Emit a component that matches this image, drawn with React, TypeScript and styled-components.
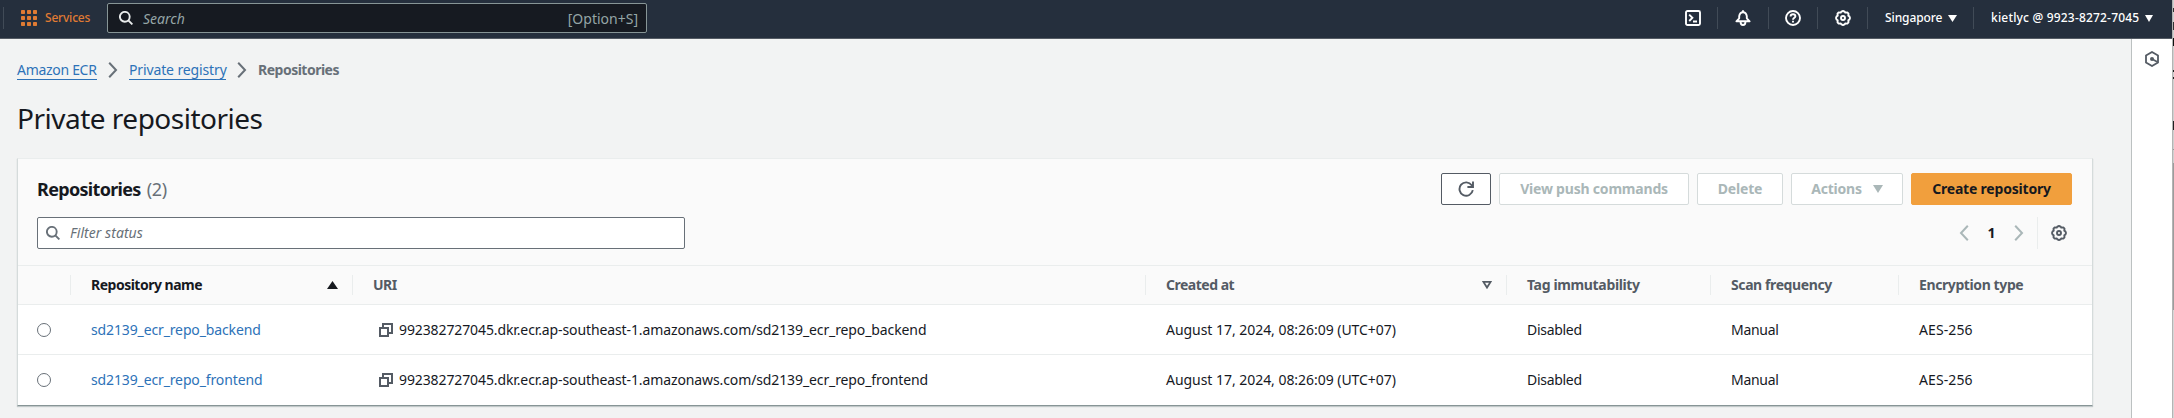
import React from 'react';
import styled, { createGlobalStyle, css } from 'styled-components';

const Global = createGlobalStyle`
  * { box-sizing: border-box; }
  body { margin: 0; background: #f2f3f3; }
  body, button, input { font-family: "Noto Sans", "Open Sans", sans-serif; font-size: 14px; color: #16191f; }
`;

const Page = styled.div`
  display: flex;
  width: 2174px;
  height: 418px;
  overflow: hidden;
`;

const Console = styled.div`
  display: flex;
  flex-direction: column;
  width: 2172px;
  flex: none;
`;

const Label = styled.span<{ $track?: number; $size?: number; $weight?: number; $italic?: boolean; $color?: string }>`
  white-space: nowrap;
  line-height: 20px;
  font-size: ${p => p.$size ?? 14}px;
  letter-spacing: ${p => p.$track ?? 0}px;
  font-weight: ${p => p.$weight ?? 400};
  ${p => p.$italic && css`font-style: italic;`}
  ${p => p.$color && css`color: ${p.$color};`}
`;

const TopBar = styled.header`
  display: flex;
  align-items: flex-start;
  height: 39px;
  background: #252f3d;
  border-bottom: 1px solid #545b64;
`;

const BarDivider = styled.i`
  width: 1px;
  height: 22px;
  margin-top: 7px;
  background: #414b57;
`;

const Services = styled.div`
  display: flex;
  align-items: center;
  gap: 8px;
  width: 103px;
  height: 36px;
  padding-left: 17px;
`;

const SearchBox = styled.div`
  display: flex;
  align-items: center;
  width: 540px;
  height: 30px;
  margin-top: 3px;
  padding: 0 8px 0 11px;
  background: #161a21;
  border: 1px solid #879596;
  border-radius: 2px;
`;

const SearchHint = styled.div`
  flex: 1;
  display: flex;
  justify-content: space-between;
  padding: 1px 0 0 10px;
`;

const BarTools = styled.nav`
  display: flex;
  margin-left: auto;
`;

const BarItem = styled.div<{ $w: number; $pad: number }>`
  display: flex;
  align-items: center;
  gap: 6px;
  height: 36px;
  width: ${p => p.$w}px;
  padding-left: ${p => p.$pad}px;
`;

const Body = styled.div`
  display: flex;
  flex: 1;
`;

const Main = styled.main`
  width: 2131px;
  padding: 21px 0 0 17px;
`;

const Crumbs = styled.nav`
  display: flex;
  align-items: center;
  height: 20px;
  gap: 11px;
`;

const CrumbLink = styled.a<{ $w: number }>`
  display: block;
  width: ${p => p.$w}px;
  height: 20px;
  border-bottom: 1px solid #2d72b8;
  color: #2d72b8;
`;

const Title = styled.h1`
  margin: 20px 0 0;
  height: 36px;
  line-height: 36px;
  font-size: 28px;
  font-weight: 400;
  letter-spacing: -0.5px;
`;

const Card = styled.section`
  width: 2076px;
  height: 248px;
  margin-top: 22px;
  background: #fff;
  border: 1px solid #d5dbdb;
  border-top-color: #eaeded;
  border-bottom-color: #879596;
  box-shadow: 0 1px 1px rgba(0, 28, 36, 0.2);
`;

const CardHead = styled.div`
  height: 107px;
  padding: 14px 20px 0 19px;
  background: #fafafa;
  border-bottom: 1px solid #eaeded;
`;

const HeadRow = styled.div<{ $top?: number }>`
  display: flex;
  align-items: center;
  justify-content: space-between;
  height: 32px;
  margin-top: ${p => p.$top ?? 0}px;
`;

const Heading = styled.h2`
  display: flex;
  gap: 6px;
  margin: 0;
  font-weight: 400;
`;

const Buttons = styled.div`
  display: flex;
  gap: 8px;
`;

const Button = styled.button<{ $w: number; $kind?: 'primary' | 'disabled' }>`
  display: flex;
  align-items: center;
  justify-content: center;
  gap: 11px;
  width: ${p => p.$w}px;
  height: 32px;
  padding: 0;
  border: 1px solid #545b64;
  border-radius: 2px;
  background: #fff;
  ${p => p.$kind === 'disabled' && css`border-color: #d5dbdb; color: #aab7b8;`}
  ${p => p.$kind === 'primary' && css`border-color: #f19f3d; background: #f19f3d;`}
`;

const Filter = styled.div`
  display: flex;
  align-items: center;
  gap: 10px;
  width: 648px;
  height: 32px;
  padding-left: 8px;
  background: #fff;
  border: 1px solid #687078;
  border-radius: 2px;
`;

const Pager = styled.div`
  display: flex;
  align-items: center;
  height: 32px;
`;

const PageNumber = styled.div`
  width: 45px;
  text-align: center;
`;

const Settings = styled.div`
  display: flex;
  align-items: center;
  height: 32px;
  margin-left: 13px;
  padding: 0 5px 0 13px;
  border-left: 1px solid #eaeded;
`;

const Row = styled.div<{ $h: number; $head?: boolean }>`
  display: grid;
  grid-template-columns: 52px 282px 793px 361px 204px 188px 194px;
  align-items: center;
  height: ${p => p.$h}px;
  ${p => p.$head && css`background: #fafafa; color: #545b64;`}
  &:not(:last-child) { border-bottom: 1px solid #eaeded; }
`;

const HeadCell = styled.div`
  display: flex;
  align-items: center;
  justify-content: space-between;
  height: 20px;
  padding: 0 14px 0 20px;
  &:not(:first-child) { border-left: 1px solid #eaeded; }
`;

const Cell = styled.div<{ $pad?: number }>`
  display: flex;
  align-items: center;
  gap: 6px;
  padding-left: ${p => p.$pad ?? 21}px;
`;

const Radio = styled.i`
  width: 14px;
  height: 14px;
  border: 1px solid #687078;
  border-radius: 50%;
  background: #fff;
`;

const SidePanel = styled.aside`
  width: 41px;
  padding: 12px 0 0 13px;
  background: #fff;
  border-left: 1px solid #bcc1c1;
`;

const Edge = styled.div`
  width: 2px;
  display: flex;
  flex-direction: column;
  border-left: 1px solid #b4b4b4;
`;

const EdgePart = styled.i<{ $h: number; $c: string }>`
  height: ${p => p.$h}px;
  background: ${p => p.$c};
`;

const Svg = styled.svg`
  display: block;
  flex: none;
  fill: none;
`;

const SearchIcon = ({ color }: { color: string }) => (
  <Svg width="14" height="14" viewBox="0 0 14 14" stroke={color} strokeWidth="1.9">
    <circle cx="5.8" cy="5.8" r="4.9" />
    <path d="M9.3 9.3L13.4 13.4" />
  </Svg>
);

const GearIcon = ({ color }: { color: string }) => (
  <Svg width="16" height="16" viewBox="0 0 16 16" stroke={color} strokeWidth="1.9" strokeLinejoin="round">
    <path d="M6.3 1.6L8 1L9.7 1.6L10.2 2.6L12.3 2.4L13.5 3.7L13.3 5.7L14.4 6.4L15 8L14.4 9.6L13.3 10.3L13.5 12.3L12.3 13.6L10.2 13.4L9.7 14.4L8 15L6.3 14.4L5.8 13.4L3.7 13.6L2.5 12.3L2.7 10.3L1.6 9.6L1 8L1.6 6.4L2.7 5.7L2.5 3.7L3.7 2.4L5.8 2.6Z" />
    <circle cx="8" cy="8" r="2" />
  </Svg>
);

const Chevron = ({ color, left }: { color: string; left?: boolean }) => (
  <Svg width="10" height="16" viewBox="0 0 10 16" stroke={color} strokeWidth="2">
    <path d={left ? 'M8.8 0.8L2 8L8.8 15.2' : 'M1.2 0.8L8 8L1.2 15.2'} />
  </Svg>
);

const Triangle = ({ color, w = 8, h = 7, up }: { color: string; w?: number; h?: number; up?: boolean }) => (
  <Svg width={w} height={h} viewBox="0 0 8 7" preserveAspectRatio="none">
    <path d={up ? 'M4 0L8 7H0Z' : 'M0 0H8L4 7Z'} fill={color} />
  </Svg>
);

const CopyIcon = () => (
  <Svg width="14" height="14" viewBox="0 0 14 14" stroke="#545b64" strokeWidth="2">
    <path d="M1 5H9V13H1Z" />
    <path d="M4 5V1H13V10H9" />
  </Svg>
);

const repos = ['sd2139_ecr_repo_backend', 'sd2139_ecr_repo_frontend'];

const edgeParts: [number, string][] = [
  [8, '#d0d0d0'], [4, '#333'], [10, '#d0d0d0'], [8, '#333'], [8, '#d0d0d0'], [8, '#111'],
  [24, '#d0d0d0'], [2, '#222'], [5, '#d0d0d0'], [2, '#222'], [42, '#d0d0d0'], [9, '#222'],
  [19, '#d0d0d0'], [1, '#999'], [13, '#d0d0d0'], [147, '#9c9c9c'], [108, '#d6d6d6'],
];

export default function App() {
  return (
    <Page>
      <Global />
      <Console>
        <TopBar>
          <BarDivider style={{ marginLeft: 3 }} />
          <Services>
            <Svg width="16" height="16" viewBox="0 0 16 16">
              {[0, 6, 12].map(y => [0, 6, 12].map(x => (
                <rect key={`${x}-${y}`} x={x} y={y} width="4" height="4" rx="0.7" fill="#e07b33" />
              )))}
            </Svg>
            <Label $size={12} $weight={500} $track={-0.2} $color="#e07b33">Services</Label>
          </Services>
          <SearchBox>
            <SearchIcon color="#eaeded" />
            <SearchHint>
              <Label $italic $color="#95a5a6" $track={0}>Search</Label>
              <Label $color="#95a5a6">[Option+S]</Label>
            </SearchHint>
          </SearchBox>
          <BarTools>
            <BarItem $w={32} $pad={0}>
              <Svg width="16" height="16" viewBox="0 0 16 16" stroke="#fff" strokeWidth="1.9">
                <rect x="1" y="1" width="14" height="14" rx="1.5" />
                <path d="M4.2 4.6L7.4 7.8L4.2 11M8 11.5H12" />
              </Svg>
            </BarItem>
            <BarDivider />
            <BarItem $w={50} $pad={17}>
              <Svg width="16" height="16" viewBox="0 0 16 16" stroke="#fff" strokeWidth="1.9" strokeLinejoin="round">
                <path d="M1.4 11.3L4.2 8.3V6.2C4.6 3.6 6 2.2 8 2.2S11.4 3.6 11.8 6.2V8.3L14.6 11.3Z" />
                <path d="M8 0.2V2.5M5.6 12C5.6 14 6.6 15 8 15S10.4 14 10.4 12" />
              </Svg>
            </BarItem>
            <BarDivider />
            <BarItem $w={48} $pad={16}>
              <Svg width="16" height="16" viewBox="0 0 16 16" stroke="#fff" strokeWidth="1.9">
                <circle cx="8" cy="8" r="7" />
                <path d="M5.6 6.5C5.6 4.9 6.6 4.2 8 4.2S10.4 5 10.4 6.2C10.4 7.8 8 7.6 8 9.8M8 10.8V12.6" />
              </Svg>
            </BarItem>
            <BarDivider />
            <BarItem $w={49} $pad={17}><GearIcon color="#fff" /></BarItem>
            <BarDivider />
            <BarItem $w={105} $pad={17}>
              <Label $size={12} $weight={500} $track={-0.1} $color="#fff">Singapore</Label>
              <Triangle color="#fff" w={9} />
            </BarItem>
            <BarDivider />
            <BarItem $w={198} $pad={17}>
              <Label $size={12} $weight={500} $track={0.18} $color="#fff">kietlyc @ 9923-8272-7045</Label>
              <Triangle color="#fff" />
            </BarItem>
          </BarTools>
        </TopBar>
        <Body>
          <Main>
            <Crumbs>
              <CrumbLink $w={80}><Label $track={-0.3}>Amazon ECR</Label></CrumbLink>
              <Chevron color="#687078" />
              <CrumbLink $w={97}><Label $track={-0.13}>Private registry</Label></CrumbLink>
              <Chevron color="#687078" />
              <Label $weight={700} $color="#687078" $track={-0.5}>Repositories</Label>
            </Crumbs>
            <Title>Private repositories</Title>
            <Card>
              <CardHead>
                <HeadRow>
                  <Heading>
                    <Label $size={18} $weight={700} $track={-0.68}>Repositories</Label>
                    <Label $size={18} $color="#687078" $track={-0.3}>(2)</Label>
                  </Heading>
                  <Buttons>
                    <Button $w={50}>
                      <Svg width="16" height="16" viewBox="0 0 16 16" stroke="#545b64" strokeWidth="1.9">
                        <path d="M14.8 9.2A6.7 6.7 0 1 1 13.7 4.2L14.4 5.2M15 0.4V6H9.4" />
                      </Svg>
                    </Button>
                    <Button $w={190} $kind="disabled"><Label $weight={700} $track={-0.2}>View push commands</Label></Button>
                    <Button $w={86} $kind="disabled"><Label $weight={700} $track={-0.2}>Delete</Label></Button>
                    <Button $w={112} $kind="disabled">
                      <Label $weight={700} $track={-0.2}>Actions</Label>
                      <Triangle color="#aab7b8" w={10} h={8} />
                    </Button>
                    <Button $w={161} $kind="primary"><Label $weight={700} $track={-0.2}>Create repository</Label></Button>
                  </Buttons>
                </HeadRow>
                <HeadRow $top={12}>
                  <Filter>
                    <SearchIcon color="#687078" />
                    <Label $italic $color="#687078" $track={0.05}>Filter status</Label>
                  </Filter>
                  <Pager>
                    <Chevron color="#aab7b8" left />
                    <PageNumber><Label $weight={700}>1</Label></PageNumber>
                    <Chevron color="#aab7b8" />
                    <Settings><GearIcon color="#545b64" /></Settings>
                  </Pager>
                </HeadRow>
              </CardHead>
              <Row $h={39} $head>
                <HeadCell />
                <HeadCell>
                  <Label $weight={700} $color="#16191f" $track={-0.5}>Repository name</Label>
                  <Triangle color="#16191f" w={11} h={8} up />
                </HeadCell>
                <HeadCell><Label $weight={700} $track={-0.5}>URI</Label></HeadCell>
                <HeadCell>
                  <Label $weight={700} $track={-0.5}>Created at</Label>
                  <Svg width="10" height="8" viewBox="0 0 10 8" stroke="#545b64" strokeWidth="1.8">
                    <path d="M1.4 0.9H8.6L5 6.6Z" />
                  </Svg>
                </HeadCell>
                <HeadCell><Label $weight={700} $track={-0.35}>Tag immutability</Label></HeadCell>
                <HeadCell><Label $weight={700} $track={-0.4}>Scan frequency</Label></HeadCell>
                <HeadCell><Label $weight={700} $track={-0.4}>Encryption type</Label></HeadCell>
              </Row>
              {repos.map(name => (
                <Row key={name} $h={50}>
                  <Cell $pad={19}><Radio /></Cell>
                  <Cell><Label $color="#2d72b8" $track={-0.13}>{name}</Label></Cell>
                  <Cell $pad={27}>
                    <CopyIcon />
                    <Label $track={-0.11}>{`992382727045.dkr.ecr.ap-southeast-1.amazonaws.com/${name}`}</Label>
                  </Cell>
                  <Cell><Label $track={-0.04}>August 17, 2024, 08:26:09 (UTC+07)</Label></Cell>
                  <Cell><Label $track={-0.3}>Disabled</Label></Cell>
                  <Cell><Label $track={-0.3}>Manual</Label></Cell>
                  <Cell><Label $track={0.1}>AES-256</Label></Cell>
                </Row>
              ))}
            </Card>
          </Main>
          <SidePanel>
            <Svg width="14" height="16" viewBox="0 0 14 16" stroke="#545b64" strokeWidth="1.8">
              <path d="M7 1L13 4.5V11.5L7 15L1 11.5V4.5Z" />
              <circle cx="7" cy="8" r="2" fill="#545b64" stroke="none" />
              <path d="M7 8L12.5 11" />
            </Svg>
          </SidePanel>
        </Body>
      </Console>
      <Edge>
        {edgeParts.map(([h, c], i) => <EdgePart key={i} $h={h} $c={c} />)}
      </Edge>
    </Page>
  );
}
